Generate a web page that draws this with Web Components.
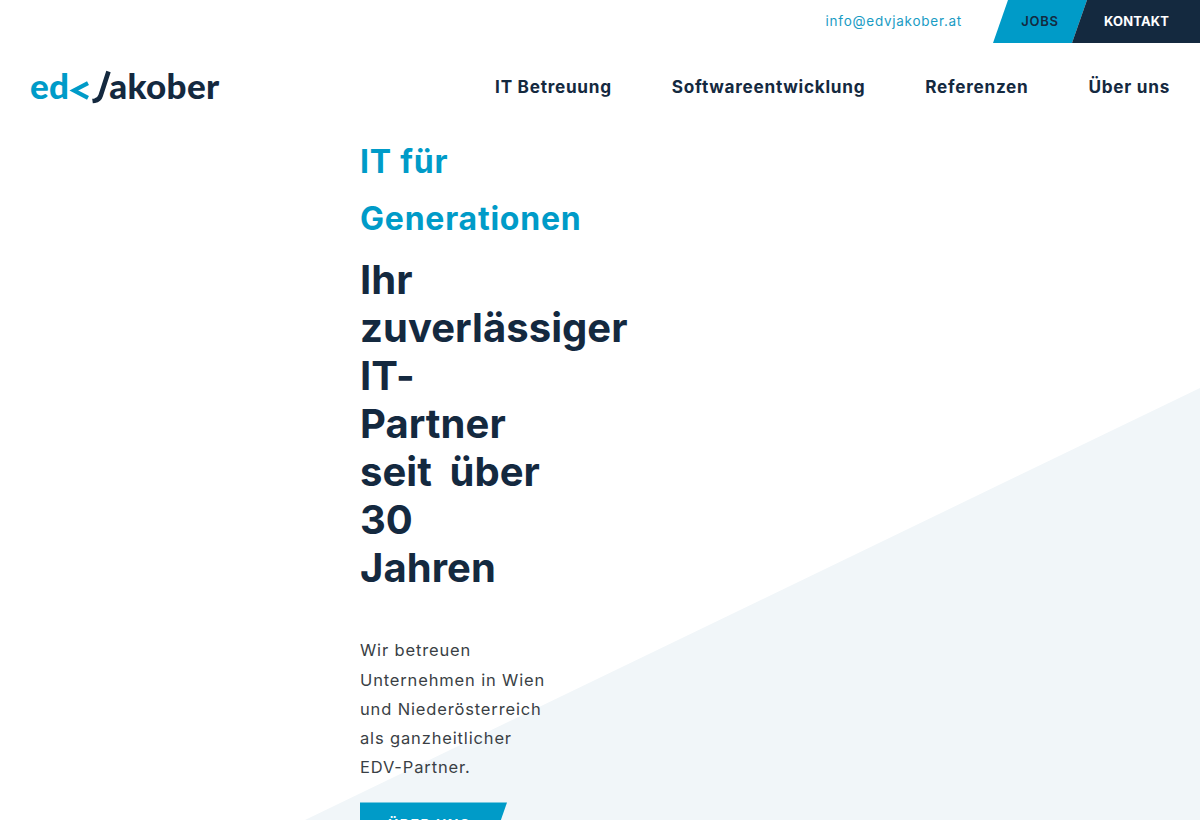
<!DOCTYPE html>
<html lang="de"><head><meta charset="utf-8"><title>EDV Jakober</title>
<style>
html,body{margin:0;padding:0;height:820px;overflow:hidden;background:#fff}
body{font-family:Inter,"Open Sans","Liberation Sans",sans-serif;color:#14293f}
</style></head><body>
<site-page>
  <site-header></site-header>
  <hero-section>
    <span slot="kicker">IT für<br>Generationen</span>
    <span slot="title">Ihr<br>zuverlässiger<br>IT-<br>Partner<br>seit über<br>30<br>Jahren</span>
    <span slot="text">Wir betreuen<br>Unternehmen in Wien<br>und Niederösterreich<br>als ganzheitlicher<br>EDV-Partner.</span>
    <skew-button>ÜBER UNS</skew-button>
  </hero-section>
</site-page>
<script>
function def(name, html){
  customElements.define(name, class extends HTMLElement{
    constructor(){super();this.attachShadow({mode:'open'}).innerHTML=html;}
  });
}
def('site-page',`<style>:host{display:block;position:relative;width:1200px;height:820px;overflow:hidden}
.tri{position:absolute;inset:0;background:#f1f6f9;clip-path:polygon(305px 820px,1200px 388px,1200px 820px);z-index:0}
.c{position:relative;z-index:1}</style><div class="tri"></div><div class="c"><slot></slot></div>`);
def('brand-logo',`<style>:host{display:flex;align-items:flex-start;height:36px;font:900 35px/32px Lato,"Open Sans",sans-serif;letter-spacing:.3px}
.a{color:#009bc8}.b{color:#14293f}svg{display:block;flex:none}</style>
<span class="a">ed</span>
<svg width="20" height="22" viewBox="0 0 20 22" style="margin:11px 0 0 0"><path d="M19 3.2 5 10.5l14 7.3" fill="none" stroke="#009bc8" stroke-width="4.2"/></svg>
<svg width="22" height="36" viewBox="0 0 22 36" style="margin:0 0 0 1px"><path d="M18.5 2.5 10.7 26.5c-.9 3-2.6 4.6-6 5.2L2.5 32" fill="none" stroke="#14293f" stroke-width="4.6"/></svg>
<span class="b" style="margin-left:-3px">akober</span>`);
def('main-nav',`<style>:host{display:flex;gap:60px;font:650 17.2px/24px Inter,sans-serif;color:#14293f;letter-spacing:.72px}a{color:inherit;text-decoration:none;white-space:nowrap}</style>
<a>IT Betreuung</a><a>Softwareentwicklung</a><a>Referenzen</a><a>Über uns</a>`);
def('top-bar',`<style>:host{display:flex;justify-content:flex-end;align-items:stretch;height:43px;font:600 13px/43px Inter,sans-serif}
.m{color:#1a9cc4;font-weight:400;font-size:13.5px;letter-spacing:.74px;margin-right:31px;line-height:42px}
.j{width:94px;background:#009bc8;color:#14293f;clip-path:polygon(15px 0,100% 0,79px 100%,0 100%);text-align:center;letter-spacing:.7px}
.k{width:128px;margin-left:-15px;background:#14293f;color:#fff;clip-path:polygon(15px 0,100% 0,100% 100%,0 100%);box-sizing:border-box;padding-left:32px;letter-spacing:.15px;font-weight:700}
</style><span class="m">info@edvjakober.at</span><span class="j">JOBS</span><span class="k">KONTAKT</span>`);
def('site-header',`<style>:host{display:block}.r{display:flex;justify-content:space-between;align-items:center;padding:0 30px;height:88px}</style>
<top-bar></top-bar><div class="r"><brand-logo></brand-logo><main-nav></main-nav></div>`);
def('hero-section',`<style>:host{display:block;padding:2px 0 0 360px;width:280px}
.k{display:block;font:650 32px/57px Inter,sans-serif;color:#009bc8;letter-spacing:.78px}
h1{margin:9px 0 44.4px;font:650 40px/48px Inter,sans-serif;color:#14293f;letter-spacing:.05px;word-spacing:8px}
.p{font:400 16.5px/29.2px Inter,sans-serif;color:#3a3f45;letter-spacing:.85px;margin-bottom:20px}
</style><div class="k"><slot name="kicker"></slot></div><h1><slot name="title"></slot></h1><div class="p"><slot name="text"></slot></div><slot></slot>`);
def('skew-button',`<style>:host{display:block;width:147px;height:46px;background:#009bc8;color:#fff;clip-path:polygon(0 0,100% 0,calc(100% - 16px) 100%,0 100%);font:700 14px/46px Inter,sans-serif;text-indent:28px;letter-spacing:1.5px}</style><slot></slot>`);
</script></body></html>
